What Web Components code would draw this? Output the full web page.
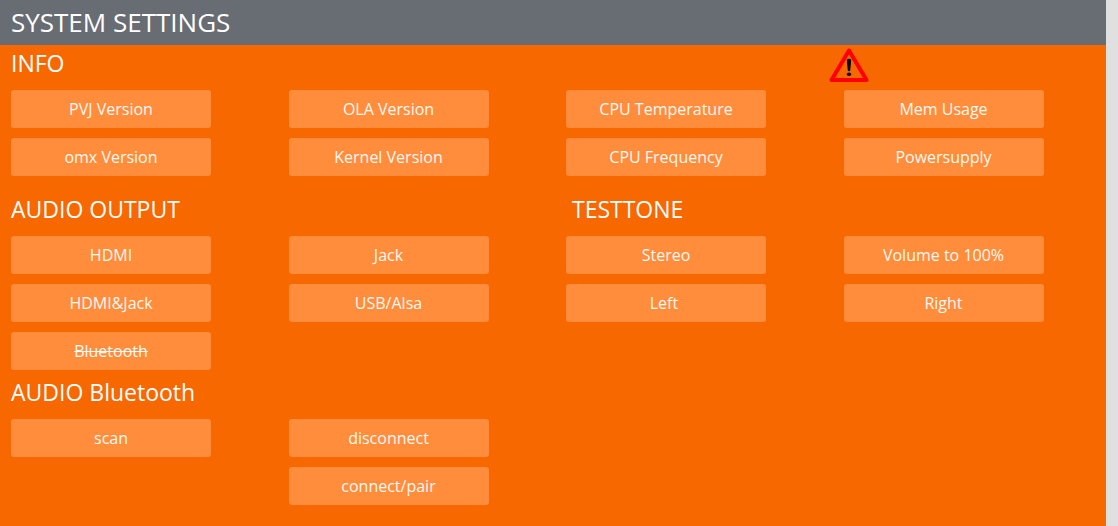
<!DOCTYPE html>
<html lang="en">
<head>
<meta charset="utf-8">
<title>System Settings</title>
<style>
  html, body { margin: 0; }
  body { font-family: "Open Sans", "Noto Sans", sans-serif; color: #fff; background: #f86800; }
</style>
</head>
<body>
<settings-page heading="SYSTEM SETTINGS">
  <settings-section class="spaced" heading="INFO">
    <warning-icon slot="status"></warning-icon>
    <settings-button>PVJ Version</settings-button>
    <settings-button>OLA Version</settings-button>
    <settings-button>CPU Temperature</settings-button>
    <settings-button>Mem Usage</settings-button>
    <settings-button>omx Version</settings-button>
    <settings-button>Kernel Version</settings-button>
    <settings-button>CPU Frequency</settings-button>
    <settings-button>Powersupply</settings-button>
  </settings-section>
  <settings-section heading="AUDIO OUTPUT" second-heading="&nbsp;TESTTONE">
    <settings-button>HDMI</settings-button>
    <settings-button>Jack</settings-button>
    <settings-button>Stereo</settings-button>
    <settings-button>Volume to 100%</settings-button>
    <settings-button>HDMI&amp;Jack</settings-button>
    <settings-button>USB/Alsa</settings-button>
    <settings-button>Left&nbsp;</settings-button>
    <settings-button>Right</settings-button>
    <settings-button struck>Bluetooth</settings-button>
  </settings-section>
  <settings-section heading="AUDIO Bluetooth">
    <settings-button>scan</settings-button>
    <settings-button>disconnect</settings-button>
    <settings-button column="2">connect/pair</settings-button>
  </settings-section>
</settings-page>

<template id="page-template">
  <style>
    :host { display: grid; grid-template-columns: 1fr 12px; min-height: 100vh; }
    .panel { background: #f86800; min-width: 0; }
    header { background: #686c73; padding: 0 11px; }
    h1 { margin: 0; font-size: 26px; font-weight: 400; line-height: 45px; }
    main { padding-left: 11px; }
    .gutter { background: #e0e0e0; }
    ::slotted(.spaced) { margin-bottom: 11px; }
  </style>
  <div class="panel">
    <header><h1></h1></header>
    <main><slot></slot></main>
  </div>
  <div class="gutter"></div>
</template>

<template id="section-template">
  <style>
    :host { display: block; padding: 3px 0 4px; }
    .head, .items { display: grid; grid-template-columns: repeat(4, minmax(0, 1fr)); column-gap: 15px; }
    .head { height: 42px; align-items: start; }
    .items { row-gap: 10px; }
    h2 { margin: 0; font-size: 23px; font-weight: 400; line-height: 30px; white-space: nowrap; }
    .second { grid-column: 3; }
    .status { grid-column: 4; grid-row: 1; margin-left: -15px; }
  </style>
  <div class="head"><h2 class="first"></h2><h2 class="second"></h2><div class="status"><slot name="status"></slot></div></div>
  <div class="items"><slot></slot></div>
</template>

<template id="button-template">
  <style>
    :host { display: block; }
    :host([column="2"]) { grid-column: 2; }
    button {
      display: block; box-sizing: border-box; width: 200px; max-width: 100%; height: 38px;
      margin: 0; padding: 0; border: 0; border-radius: 3px;
      background: #ff8d3b; color: #fff8f3; font: inherit; font-size: 16px;
      line-height: 38px; text-align: center; cursor: pointer;
    }
    button:hover { background: #ff9d55; }
    :host([struck]) button { text-decoration: line-through; }
  </style>
  <button type="button"><slot></slot></button>
</template>

<template id="warning-template">
  <style>
    :host { display: block; width: 40px; height: 34px; }
    svg { display: block; }
  </style>
  <svg width="40" height="34" viewBox="0 0 40 34" role="img" aria-label="Warning">
    <path d="M20 2.5 L37.5 32 H2.5 Z" fill="none" stroke="#f00" stroke-width="4" stroke-linejoin="round"/>
    <path d="M17.8 11.5 Q20 9.8 22.2 11.5 L21.2 22.5 Q20 23.9 18.8 22.5 Z"/>
    <ellipse cx="20" cy="26.2" rx="2.2" ry="1.8"/>
  </svg>
</template>

<script>
  function attach(host, id) {
    const root = host.attachShadow({ mode: "open" });
    root.append(document.getElementById(id).content.cloneNode(true));
    return root;
  }
  class SettingsPage extends HTMLElement {
    constructor() {
      super();
      attach(this, "page-template").querySelector("h1").textContent = this.getAttribute("heading");
    }
  }
  class SettingsSection extends HTMLElement {
    constructor() {
      super();
      const root = attach(this, "section-template");
      root.querySelector(".first").textContent = this.getAttribute("heading");
      const second = root.querySelector(".second");
      if (this.hasAttribute("second-heading")) second.textContent = this.getAttribute("second-heading");
      else second.remove();
    }
  }
  class SettingsButton extends HTMLElement {
    constructor() { super(); attach(this, "button-template"); }
  }
  class WarningIcon extends HTMLElement {
    constructor() { super(); attach(this, "warning-template"); }
  }
  customElements.define("settings-page", SettingsPage);
  customElements.define("settings-section", SettingsSection);
  customElements.define("settings-button", SettingsButton);
  customElements.define("warning-icon", WarningIcon);
</script>
</body>
</html>
